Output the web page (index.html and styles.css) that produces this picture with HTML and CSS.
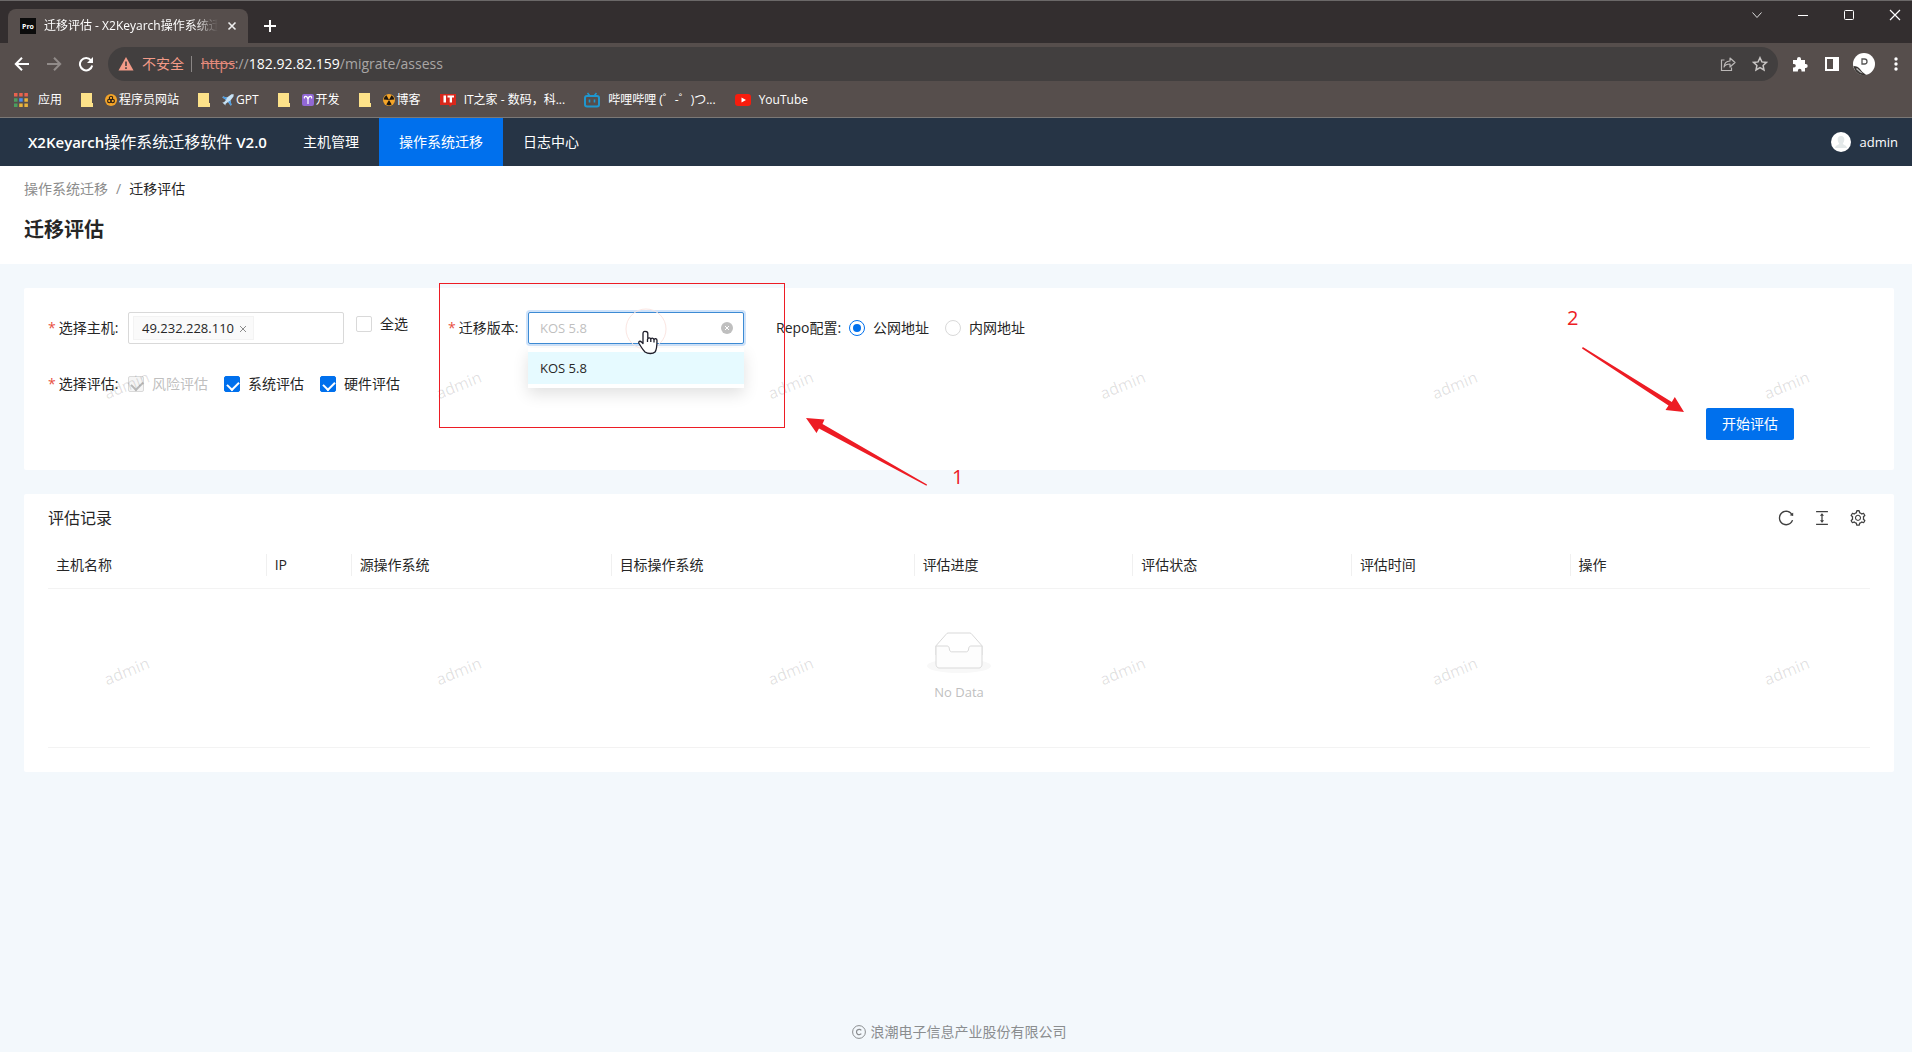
FILE: index.html
```html
<!DOCTYPE html>
<html lang="zh-CN">
<head>
<meta charset="utf-8">
<meta name="viewport" content="width=device-width, initial-scale=1">
<title>迁移评估 - X2Keyarch操作系统迁移软件</title>
<link rel="stylesheet" href="styles.css">
</head>
<body>
<div class="browser">
  <div class="tabstrip">
    <div class="tab">
      <svg class="tab-icon" width="16" height="16" viewBox="0 0 16 16"><rect width="16" height="16" fill="#0c0c0c"/><text x="8" y="11" text-anchor="middle" font-size="7" font-weight="700" fill="#fff">Pro</text></svg>
      <span class="tab-title">迁移评估 - X2Keyarch操作系统迁</span>
      <button class="icon-btn" aria-label="关闭标签页"><svg width="10" height="10" viewBox="0 0 10 10"><path d="M1.5 1.5l7 7M8.5 1.5l-7 7" stroke="#eee" stroke-width="1.6"/></svg></button>
    </div>
    <button class="icon-btn new-tab" aria-label="新标签页"><svg width="14" height="14" viewBox="0 0 14 14"><path d="M7 1v12M1 7h12" stroke="#fff" stroke-width="2"/></svg></button>
    <div class="window-controls">
      <button class="icon-btn" aria-label="搜索标签页"><svg width="12" height="12" viewBox="0 0 12 12"><path d="M1.5 3.5L6 8.5l4.5-5" fill="none" stroke="#ddd"/></svg></button>
      <button class="icon-btn" aria-label="最小化"><svg width="12" height="12" viewBox="0 0 12 12"><path d="M1 6.5h10" stroke="#fff"/></svg></button>
      <button class="icon-btn" aria-label="最大化"><svg width="12" height="12" viewBox="0 0 12 12"><rect x="1.5" y="1.5" width="9" height="9" rx="1" fill="none" stroke="#fff"/></svg></button>
      <button class="icon-btn" aria-label="关闭"><svg width="12" height="12" viewBox="0 0 12 12"><path d="M1 1l10 10M11 1L1 11" stroke="#fff" stroke-width="1.2"/></svg></button>
    </div>
  </div>
  <div class="toolbar">
    <button class="icon-btn" aria-label="后退"><svg width="16" height="16" viewBox="0 0 16 16"><path d="M15 8H2M8 1.8L1.8 8 8 14.2" fill="none" stroke="#fff" stroke-width="2"/></svg></button>
    <button class="icon-btn" aria-label="前进"><svg width="16" height="16" viewBox="0 0 16 16"><path d="M1 8h13M8 1.8L14.2 8 8 14.2" fill="none" stroke="#918b89" stroke-width="2"/></svg></button>
    <button class="icon-btn" aria-label="重新加载"><svg width="16" height="16" viewBox="0 0 16 16"><path d="M13 4.3A6.2 6.2 0 1 0 14.2 9.5" fill="none" stroke="#fff" stroke-width="2"/><path d="M15 1v6H9z" fill="#fff"/></svg></button>
    <div class="omnibox">
      <svg width="16" height="14" viewBox="0 0 16 14"><path d="M8 0l7.5 13.5H.5z" fill="#f39b88"/><path d="M8 4.5v4.5M8 10.3v1.7" stroke="#423f3f" stroke-width="1.6"/></svg>
      <span class="insecure">不安全</span>
      <span class="omnibox-rule"></span>
      <span class="url"><s>https</s>://<b>182.92.82.159</b>/migrate/assess</span>
      <span class="omnibox-actions">
        <button class="icon-btn" aria-label="分享"><svg width="16" height="16" viewBox="0 0 16 16"><path d="M4.5 4H1.5v10.5h10V11.5" fill="none" stroke="#bbb8b7" stroke-width="1.2"/><path d="M10 5V2l5 4.5L10 11V8c-3 0-5 .8-6 3C4.3 7 6.5 5.2 10 5z" fill="none" stroke="#bbb8b7" stroke-width="1.2" stroke-linejoin="round"/></svg></button>
        <button class="icon-btn" aria-label="收藏"><svg width="16" height="16" viewBox="0 0 16 16"><path d="M8 1.7l1.9 4.2 4.6.5-3.4 3.1.9 4.5-4-2.3L4 14l.9-4.5L1.5 6.4l4.6-.5z" fill="none" stroke="#c8c5c4" stroke-width="1.5"/></svg></button>
      </span>
    </div>
    <button class="icon-btn" aria-label="扩展程序"><svg width="16" height="16" viewBox="0 0 16 16"><path d="M1 4h4V3a2 2 0 1 1 4 0v1h4v4h.7a2 2 0 1 1 0 4H13v3.5H9.5V14.500a1.800 1.800 0 1 0-3.600 0v1H1V11.500h1a1.800 1.800 0 1 0 0-3.600H1z" fill="#fff"/></svg></button>
    <button class="icon-btn" aria-label="侧边栏"><svg width="16" height="16" viewBox="0 0 16 16"><path d="M1 1h14v14H1zM3 3v10h6V3z" fill="#fff" fill-rule="evenodd"/></svg></button>
    <button class="icon-btn" aria-label="个人资料"><svg width="22" height="22" viewBox="0 0 22 22"><circle cx="11" cy="11" r="11" fill="#fff"/><path d="M.5 13c3 0 5 1 6.500 3S10 20 13 21.700C7 23.500 1.500 19 .5 13z" fill="#3a3634"/><path d="M4 15l6 5.500-3-1-4-3.500z" fill="#bbb"/><path d="M9 6h2.500a2.500 2.500 0 0 1 0 5H9z" fill="none" stroke="#555" stroke-width="1.300"/></svg></button>
    <button class="icon-btn" aria-label="菜单"><svg width="4" height="16" viewBox="0 0 4 16"><g fill="#fff"><circle cx="2" cy="3" r="1.700"/><circle cx="2" cy="8" r="1.700"/><circle cx="2" cy="13" r="1.700"/></g></svg></button>
  </div>
  <nav class="bookmarks" aria-label="书签">
    <a href="#" class="bm bm-wide"><svg width="14" height="14" viewBox="0 0 14 14"><path d="M0 0h3.500v3.500H0zM5.200 0h3.500v3.500H5.200zM10.400 0h3.500v3.500h-3.500z" fill="#e8624e"/><path d="M0 5.200h3.500v3.500H0zM0 10.400h3.500v3.500H0z" fill="#4b9e5f"/><path d="M5.200 5.200h3.500v3.500H5.200z" fill="#4a8df0"/><path d="M10.400 5.200h3.500v3.500h-3.500zM5.200 10.400h3.500v3.500H5.200zM10.400 10.400h3.500v3.500h-3.500z" fill="#e8b33c"/></svg>应用</a>
    <a href="#" class="bm"><svg width="12" height="14" viewBox="0 0 12 14"><path d="M0 0h11v10h1v4H0z" fill="#fde289"/></svg><span class="bm-text"><svg width="12" height="12" viewBox="0 0 12 12"><circle cx="6" cy="6" r="6" fill="#f4a428"/><g fill="none" stroke="#2b2015" stroke-width="1.100"><circle cx="6" cy="4" r="1.700"/><circle cx="4.300" cy="7" r="1.700"/><circle cx="7.700" cy="7" r="1.700"/></g></svg>程序员网站</span></a>
    <a href="#" class="bm"><svg width="12" height="14" viewBox="0 0 12 14"><path d="M0 0h11v10h1v4H0z" fill="#fde289"/></svg><span class="bm-text"><svg width="12" height="12" viewBox="0 0 12 12"><path d="M1 2.500l4 1L9.500.3 11.700.3 11.500 2.500 8.500 6.500l1 4.500-1 .5L6 8 3.500 10v1.500L2 10 .3 8.500 2 8.300 4 6 .5 3.500z" fill="#c6e2f6"/><path d="M1 2.500l4 1-1 2.500L.5 3.500zM8.500 6.500l1 4.500-1 .5L6 8z" fill="#4a9be0"/></svg>GPT</span></a>
    <a href="#" class="bm"><svg width="12" height="14" viewBox="0 0 12 14"><path d="M0 0h11v10h1v4H0z" fill="#fde289"/></svg><span class="bm-text"><svg width="12" height="12" viewBox="0 0 12 12"><rect width="12" height="12" rx="2" fill="#9168d4"/><path d="M2.500 4.500C1.500 1.500 5.500 1.500 6 5.500v4.500M6 5.500c.5-4 4.500-4 3.500-1" fill="none" stroke="#fff" stroke-width="1.200"/></svg>开发</span></a>
    <a href="#" class="bm"><svg width="12" height="14" viewBox="0 0 12 14"><path d="M0 0h11v10h1v4H0z" fill="#fde289"/></svg><span class="bm-text"><svg width="12" height="12" viewBox="0 0 12 12"><circle cx="6" cy="6" r="6" fill="#f4a428"/><path d="M6 6L.7 5.500A5.300 5.300 0 0 1 3.500 1.300zM6 6l2.500-4.700a5.300 5.300 0 0 1 2.800 4.200zM6 6l2.700 4.600a5.300 5.300 0 0 1-5.400 0z" fill="#1d1710"/></svg>博客</span></a>
    <a href="#" class="bm bm-site"><svg width="16" height="14" viewBox="0 0 16 14"><path d="M0 1h16v11h-4L10 14l-1-2H0z" fill="#d8281c"/><path d="M3.500 2.500h2.500v7H3.500zM7.500 2.500H14v2h-2v5H9.700v-5H7.500z" fill="#fff"/></svg>IT之家 - 数码，科...</a>
    <a href="#" class="bm bm-site"><svg width="16" height="16" viewBox="0 0 16 16"><rect x="1" y="4" width="14" height="10.500" rx="2" fill="none" stroke="#1f97cf" stroke-width="2"/><path d="M3.500 1l2 2.500M12.500 1l-2 2.500M5.500 7.500v3M10.500 7.500v3" stroke="#1f97cf" stroke-width="1.600"/></svg>哔哩哔哩 (゜-゜)つ...</a>
    <a href="#" class="bm bm-site"><svg width="16" height="12" viewBox="0 0 16 12"><rect width="16" height="12" rx="3" fill="#f61c0d"/><path d="M6.500 3.500l4.500 2.500-4.500 2.500z" fill="#fff"/></svg>YouTube</a>
  </nav>
</div>

<header class="app-header">
  <div class="brand"><b>X2Keyarch</b>操作系统迁移软件<b> V2.0</b></div>
  <nav class="menu">
    <a href="#">主机管理</a>
    <a href="#" class="active" aria-current="page">操作系统迁移</a>
    <a href="#">日志中心</a>
  </nav>
  <div class="user">
    <svg width="20" height="20" viewBox="0 0 20 20"><circle cx="10" cy="10" r="10" fill="#fff"/><path d="M10 4c2.500 0 3.600 1.800 3.300 4-.2 1.600-.8 2.600-1.500 3.400.2 1.600 3.700 1.300 4.200 4.600H4c.5-3.300 4-3 4.200-4.600C7.500 10.600 6.900 9.600 6.700 8 6.400 5.800 7.500 4 10 4z" fill="#e3e8e9"/></svg>
    <span>admin</span>
  </div>
</header>

<section class="page-head">
  <nav class="breadcrumb" aria-label="面包屑"><a href="#">操作系统迁移</a><span>/</span><span class="current">迁移评估</span></nav>
  <h1>迁移评估</h1>
</section>

<main class="content">
  <form class="card assess-form">
    <div class="row">
      <label class="field-label required" for="host">选择主机:</label>
      <div class="control tags">
        <span class="tag">49.232.228.110<button type="button" class="icon-btn" aria-label="移除主机"><svg width="8" height="8" viewBox="0 0 8 8"><path d="M1 1l6 6M7 1L1 7" stroke="#8c8c8c"/></svg></button></span>
        <input id="host" type="text">
      </div>
      <label class="check select-all"><input type="checkbox">全选</label>
      <label class="field-label required" for="version">迁移版本:</label>
      <div class="control combo">
        <input id="version" type="text" role="combobox" aria-expanded="true" aria-controls="versions" value="KOS 5.8" readonly>
        <button type="button" class="icon-btn" aria-label="清除"><svg width="12" height="12" viewBox="0 0 12 12"><circle cx="6" cy="6" r="6" fill="#bfbfbf"/><path d="M4 4l4 4M8 4L4 8" stroke="#fff"/></svg></button>
        <ul class="options" id="versions" role="listbox"><li role="option" aria-selected="true">KOS 5.8</li></ul>
      </div>
      <fieldset class="group repo">
        <legend>Repo配置:</legend>
        <label class="check"><input type="radio" name="repo" checked>公网地址</label>
        <label class="check"><input type="radio" name="repo">内网地址</label>
      </fieldset>
    </div>
    <div class="row">
      <span class="field-label required" id="kinds">选择评估:</span>
      <div class="group" role="group" aria-labelledby="kinds">
        <label class="check disabled"><input type="checkbox" checked disabled>风险评估</label>
        <label class="check"><input type="checkbox" checked>系统评估</label>
        <label class="check"><input type="checkbox" checked>硬件评估</label>
      </div>
    </div>
    <div class="actions"><button type="button" class="primary">开始评估</button></div>
  </form>

  <section class="card records">
    <div class="records-bar">
      <h2>评估记录</h2>
      <div class="tools">
        <button class="icon-btn" aria-label="刷新"><svg width="18" height="18" viewBox="0 0 1024 1024"><path d="M909.1 209.3l-56.4 44.1C775.8 155.1 656.2 92 521.9 92 290 92 102.3 279.5 102 511.5 101.7 743.7 289.8 932 521.9 932c181.3 0 335.8-115 394.6-276.1 1.5-4.2-.7-8.9-4.9-10.3l-56.7-19.5a8 8 0 00-10.1 4.8c-1.8 5-3.8 10-5.9 14.9-17.3 41-42.1 77.8-73.7 109.4A344.77 344.77 0 01655.9 829c-42.3 17.9-87.4 27-133.8 27-46.5 0-91.5-9.1-133.8-27A341.5 341.5 0 01279 755.2a342.16 342.16 0 01-73.7-109.4c-17.9-42.4-27-87.4-27-133.9s9.1-91.5 27-133.9c17.3-41 42.1-77.8 73.7-109.4 31.6-31.6 68.4-56.4 109.3-73.8 42.3-17.9 87.4-27 133.8-27 46.5 0 91.5 9.1 133.8 27a341.5 341.5 0 01109.3 73.8c9.9 9.9 19.2 20.4 27.8 31.4l-60.2 47a8 8 0 003 14.1l175.6 43c5 1.2 9.9-2.6 9.9-7.7l.8-180.9c-.1-6.6-7.8-10.3-13-6.2z"/></svg></button>
        <button class="icon-btn" aria-label="密度"><svg width="18" height="18" viewBox="0 0 1024 1024"><path d="M840 836H184c-4.4 0-8 3.6-8 8v60c0 4.4 3.6 8 8 8h656c4.4 0 8-3.6 8-8v-60c0-4.4-3.6-8-8-8zm0-724H184c-4.4 0-8 3.6-8 8v60c0 4.4 3.6 8 8 8h656c4.4 0 8-3.6 8-8v-60c0-4.4-3.6-8-8-8zM610.8 378c6 0 9.4-7 5.7-11.7L515.7 238.7a7.14 7.14 0 00-11.3 0L403.6 366.3a7.23 7.23 0 005.7 11.7H476v268h-62.8c-6 0-9.4 7-5.7 11.7l100.8 127.5c2.9 3.7 8.5 3.7 11.3 0l100.8-127.5c3.7-4.7.4-11.7-5.7-11.7H548V378h62.8z"/></svg></button>
        <button class="icon-btn" aria-label="列设置"><svg width="18" height="18" viewBox="0 0 1024 1024"><path d="M924.8 625.7l-65.5-56c3.1-19 4.7-38.4 4.7-57.8s-1.6-38.8-4.7-57.8l65.5-56a32.03 32.03 0 009.3-35.2l-.9-2.6a443.74 443.74 0 00-79.7-137.9l-1.8-2.1a32.12 32.12 0 00-35.1-9.5l-81.3 28.9c-30-24.6-63.5-44-99.7-57.6l-15.7-85a32.05 32.05 0 00-25.8-25.7l-2.7-.5c-52.1-9.4-106.9-9.4-159 0l-2.7.5a32.05 32.05 0 00-25.8 25.7l-15.8 85.4a351.86 351.86 0 00-99 57.4l-81.9-29.1a32 32 0 00-35.1 9.5l-1.8 2.1a446.02 446.02 0 00-79.7 137.9l-.9 2.6c-4.5 12.5-.8 26.5 9.3 35.2l66.3 56.6c-3.1 18.8-4.6 38-4.6 57.1 0 19.2 1.5 38.4 4.6 57.1L99 625.5a32.03 32.03 0 00-9.3 35.2l.9 2.6c18.1 50.4 44.9 96.9 79.7 137.9l1.8 2.1a32.12 32.12 0 0035.1 9.5l81.9-29.1c29.8 24.5 63.1 43.9 99 57.4l15.8 85.4a32.05 32.05 0 0025.8 25.7l2.7.5a449.4 449.4 0 00159 0l2.7-.5a32.05 32.05 0 0025.8-25.7l15.7-85a350 350 0 0099.7-57.6l81.3 28.9a32 32 0 0035.1-9.5l1.8-2.1c34.8-41.1 61.6-87.5 79.7-137.9l.9-2.6c4.5-12.3.8-26.3-9.3-35zM788.3 465.9c2.5 15.1 3.8 30.6 3.8 46.1s-1.3 31-3.8 46.1l-6.6 40.1 74.7 63.9a370.03 370.03 0 01-42.6 73.6L721 702.8l-31.4 25.8c-23.9 19.6-50.5 35-79.3 45.8l-38.1 14.3-17.9 97a377.5 377.5 0 01-85 0l-17.9-97.2-37.8-14.5c-28.5-10.8-55-26.2-78.7-45.7l-31.4-25.9-93.4 33.2c-17-22.9-31.2-47.6-42.6-73.6l75.5-64.5-6.5-40c-2.4-14.9-3.7-30.3-3.7-45.5 0-15.3 1.2-30.6 3.7-45.5l6.5-40-75.5-64.5c11.3-26.1 25.6-50.7 42.6-73.6l93.4 33.2 31.4-25.9c23.7-19.5 50.2-34.9 78.7-45.7l37.9-14.3 17.9-97.2c28.1-3.2 56.8-3.2 85 0l17.9 97 38.1 14.3c28.7 10.8 55.4 26.2 79.3 45.8l31.4 25.8 92.8-32.9c17 22.9 31.2 47.6 42.6 73.6L781.8 426l6.5 39.9zM512 326c-97.2 0-176 78.8-176 176s78.8 176 176 176 176-78.8 176-176-78.8-176-176-176zm79.2 255.2A111.6 111.6 0 01512 614c-29.9 0-58-11.7-79.2-32.8A111.6 111.6 0 01400 502c0-29.9 11.7-58 32.8-79.2C454 401.6 482.1 390 512 390c29.9 0 58 11.6 79.2 32.8A111.6 111.6 0 01624 502c0 29.9-11.7 58-32.8 79.2z"/></svg></button>
      </div>
    </div>
    <table>
      <colgroup><col class="c-name"><col class="c-ip"><col class="c-source"><col class="c-target"><col class="c-info"><col class="c-info"><col class="c-info"><col></colgroup>
      <thead><tr><th>主机名称</th><th>IP</th><th>源操作系统</th><th>目标操作系统</th><th>评估进度</th><th>评估状态</th><th>评估时间</th><th>操作</th></tr></thead>
      <tbody><tr><td colspan="8"><div class="empty">
        <svg width="64" height="41" viewBox="0 0 64 41"><g transform="translate(0 1)" fill="none" fill-rule="evenodd"><ellipse fill="#f8f8f8" cx="32" cy="33" rx="32" ry="7"/><g stroke="#d9d9d9"><path d="M55 12.76L44.854 1.258C44.367.474 43.656 0 42.907 0H21.093c-.749 0-1.46.474-1.947 1.257L9 12.761V22h46v-9.24z" fill="#fff"/><path d="M41.613 15.931c0-1.605.994-2.93 2.227-2.931H55v18.137C55 33.26 53.68 35 52.05 35h-40.1C10.32 35 9 33.259 9 31.137V13h11.16c1.233 0 2.227 1.323 2.227 2.928v.022c0 1.605 1.005 2.901 2.237 2.901h14.752c1.232 0 2.237-1.308 2.237-2.913v-.007z" fill="#fdfdfd"/></g></g></svg>
        <span>No Data</span></div></td></tr></tbody>
    </table>
  </section>

  <div class="watermarks" aria-hidden="true">
    <span>admin</span><span>admin</span><span>admin</span><span>admin</span><span>admin</span><span>admin</span>
    <span>admin</span><span>admin</span><span>admin</span><span>admin</span><span>admin</span><span>admin</span>
  </div>
</main>

<footer class="footer">
  <svg width="14" height="14" viewBox="0 0 14 14"><g fill="none" stroke="#8a8d8f"><circle cx="7" cy="7" r="6.400"/><path d="M9.300 5.300A2.700 2.700 0 1 0 9.300 8.700" stroke-width="1.200"/></g></svg>
  浪潮电子信息产业股份有限公司
</footer>

<svg class="annotations" aria-hidden="true">
  <circle cx="646" cy="329" r="20" fill="none" stroke="#fbe6e2"/>
  <rect x="439.500" y="283.500" width="345" height="144" fill="none" stroke="#ed1c24"/>
  <g fill="#ed1c24">
    <path d="M806 418l18.500 1.500-2 4.500L927 484.500l-.5 1.200L819 428.500l-2.500 4.500z"/>
    <path d="M1684 412l-18.500-2 3-4.500L1582 348.500l.8-1.500 89 55 3-5z"/>
    <text x="952" y="484">1</text>
    <text x="1567" y="325">2</text>
  </g>
  <path d="M645.500 331.500c-1.500-.5-2.500.5-2.500 2v10l-1.500-1.500c-1.500-1.500-3.500-.5-2.500 1.500 2 3 3.500 6 6 8.500 3 2 8 2 10 0 1.800-2.500 2-6 2-11.500 0-2-2.500-2.500-3-.5-.2-2.500-3-2.500-3.200-.5-.3-2-2.800-2-3-.5v-5.500c0-1.200-1-2-2.300-2zM647.500 339v3M650.800 339.500v2.500M654 340v2.500" fill="#fff" stroke="#1e1e2a" stroke-width="1.300" stroke-linejoin="round"/>
</svg>
</body>
</html>
```
FILE: styles.css
```css
* { box-sizing: border-box; }

body {
  position: relative;
  display: flex;
  flex-direction: column;
  min-height: 100vh;
  margin: 0;
  background: #f3f8fc;
  color: #262626;
  font: 14px/22px "Open Sans", "Noto Sans CJK SC", sans-serif;
}

h1, h2, ul, fieldset { margin: 0; padding: 0; border: 0; }
a { color: inherit; text-decoration: none; }
svg { flex: none; }
button, input { font: inherit; color: inherit; }

.icon-btn {
  display: flex;
  flex: none;
  align-items: center;
  justify-content: center;
  padding: 0;
  border: 0;
  background: none;
}

/* Browser window */
.browser {
  border-top: 1px solid #6b6868;
  border-bottom: 1px solid #7b7876;
  background: #564e4c;
  color: #fff;
}

.tabstrip {
  display: flex;
  align-items: flex-end;
  height: 42px;
  padding-left: 8px;
  background: #332e2f;
}

.tab {
  display: flex;
  align-items: center;
  gap: 8px;
  width: 240px;
  height: 34px;
  padding: 0 10px 0 12px;
  border-radius: 8px 8px 0 0;
  background: #564e4c;
  font-size: 12px;
}

.tab-title {
  flex: 1;
  overflow: hidden;
  white-space: nowrap;
  mask-image: linear-gradient(90deg, #000 86%, transparent);
}

.tab .icon-btn { width: 12px; }
.new-tab { width: 44px; height: 34px; }

.window-controls {
  display: flex;
  align-self: flex-start;
  margin-left: auto;
}

.window-controls .icon-btn { width: 46px; height: 28px; }
.window-controls .icon-btn:last-child { width: 34px; margin-left: 6px; }

.toolbar {
  display: flex;
  align-items: center;
  height: 42px;
  padding: 0 6px;
}

.toolbar > .icon-btn { width: 32px; }
.toolbar > .icon-btn:last-child { width: 20px; }
.toolbar > .icon-btn:nth-last-child(2) { margin-right: 6px; }

.omnibox {
  display: flex;
  flex: 1;
  align-items: center;
  height: 34px;
  margin: 0 6px;
  padding: 0 2px 0 10px;
  border-radius: 17px;
  background: #423f3f;
}

.insecure { margin-left: 8px; color: #f39b88; }
.omnibox-rule { width: 1px; height: 16px; margin: 0 9px 0 7px; background: #8a8685; }
.url { color: #a9a6a5; }
.url s { color: #e58a7b; }
.url b { color: #fff; font-weight: 400; }
.omnibox-actions { display: flex; margin-left: auto; }
.omnibox-actions .icon-btn { width: 32px; }

.bookmarks {
  display: flex;
  align-items: center;
  gap: 19px;
  height: 32px;
  padding: 0 14px 3px;
  font-size: 12px;
}

.bm { display: flex; align-items: center; gap: 12px; white-space: nowrap; }
.bm-wide { gap: 10px; }
.bm-site { gap: 8px; }
.bm-text { display: flex; align-items: center; gap: 2px; }

/* Application header */
.app-header {
  display: flex;
  align-items: center;
  height: 48px;
  padding: 0 14px 0 28px;
  background: #263445;
  color: #fff;
}

.brand { flex: 0 0 255px; font-size: 16px; white-space: pre; }
.brand b { font-size: 15px; font-weight: 600; }
.menu { display: flex; align-self: stretch; }
.menu a { padding: 0 20px; line-height: 48px; white-space: nowrap; }
.menu .active { background: #0070ed; }
.user { display: flex; align-items: center; gap: 9px; margin-left: auto; font-size: 13px; }

.page-head { padding: 12px 24px 18px; background: #fff; }
.breadcrumb { display: flex; gap: 8px; color: #8c8c8c; }
.breadcrumb .current { color: #262626; }
h1 { margin-top: 14px; font-size: 20px; line-height: 32px; }

.content {
  position: relative;
  display: flex;
  flex: 1;
  flex-direction: column;
  gap: 24px;
  padding: 24px 18px 24px 24px;
}

.card { background: #fff; border-radius: 2px; }

/* Assessment form */
.assess-form { padding: 24px 24px 30px; }
.row { display: flex; min-height: 32px; }
.row + .row { margin-top: 24px; }
.field-label { width: 80px; line-height: 32px; white-space: nowrap; }
.required::before { content: "*"; margin-right: 3px; color: #e8503f; }

.control {
  display: flex;
  align-items: center;
  width: 216px;
  height: 32px;
  border: 1px solid #d9d9d9;
  border-radius: 2px;
  background: #fff;
  font-size: 13px;
}

.control input { flex: 1; min-width: 0; padding: 0; border: 0; outline: 0; background: none; }
.tags { padding: 0 4px; }

.tag {
  display: flex;
  align-items: center;
  gap: 5px;
  height: 24px;
  padding: 0 6px 0 8px;
  border: 1px solid #f3f3f3;
  background: #fafafa;
}

.tag .icon-btn { padding-top: 2px; }

.combo {
  position: relative;
  padding: 0 10px 0 11px;
  border-color: #3d8bd4;
  box-shadow: 0 0 0 2px #cfe3fa;
}

.combo input { color: #bfbfbf; }

.options {
  position: absolute;
  top: 35px;
  left: -1px;
  width: 216px;
  padding: 4px 0;
  background: #fff;
  box-shadow: 0 6px 16px rgba(0, 0, 0, .12);
  list-style: none;
}

.options li { padding: 0 12px; background: #e6faff; font-weight: 500; line-height: 32px; }

.check { display: flex; align-items: center; gap: 8px; white-space: nowrap; }
.select-all { height: 24px; margin: 0 40px 0 12px; }

.check input {
  position: relative;
  width: 16px;
  height: 16px;
  margin: 0;
  border: 1px solid #d9d9d9;
  border-radius: 2px;
  background: #fff;
  appearance: none;
}

.check input[type="radio"] { border-radius: 50%; }
.check input[type="checkbox"]:checked { border-color: #0070ed; background: #0070ed; }

.check input[type="checkbox"]:checked::after {
  content: "";
  position: absolute;
  top: 2px;
  left: 4px;
  width: 6px;
  height: 9px;
  border: solid #fff;
  border-width: 0 2px 2px 0;
  transform: rotate(45deg);
}

.check input[type="radio"]:checked { border-color: #0070ed; }

.check input[type="radio"]:checked::after {
  content: "";
  position: absolute;
  inset: 3px;
  border-radius: 50%;
  background: #0070ed;
}

.check.disabled { color: #bfbfbf; }
.check.disabled input[type="checkbox"] { border-color: #d9d9d9; background: #f5f5f5; }
.check.disabled input[type="checkbox"]::after { border-color: #b8b8b8; }

.group { display: flex; align-items: center; gap: 16px; }
.repo { margin-left: 32px; }
.repo legend { float: left; width: 57px; padding: 0; line-height: 32px; white-space: nowrap; }

.actions { display: flex; justify-content: flex-end; margin-top: 8px; padding-right: 76px; }

.primary {
  height: 32px;
  padding: 0 16px;
  border: 0;
  border-radius: 2px;
  background: #0070ed;
  color: #fff;
}

/* Records table */
.records { padding: 0 24px 24px; }
.records-bar { display: flex; align-items: center; justify-content: space-between; height: 48px; }
h2 { font-size: 16px; font-weight: 400; }
.tools { display: flex; gap: 18px; padding-right: 3px; fill: #404040; }

table { width: 100%; border-collapse: separate; border-spacing: 0; table-layout: fixed; }
.c-name, .c-info { width: 12%; }
.c-ip { width: 85px; }
.c-source { width: 260px; }
.c-target { width: 303px; }

th {
  padding: 12px 8px;
  border-bottom: 1px solid #f3f3f3;
  background: linear-gradient(#f0f0f0, #f0f0f0) right center / 1px 22px no-repeat;
  font-weight: 400;
  text-align: left;
}

th:last-child { background: none; }
td { padding: 43px 8px 44px; border-bottom: 1px solid #f3f3f3; }
.empty { display: flex; flex-direction: column; align-items: center; gap: 8px; color: #bfbfbf; font-size: 13px; }

/* Tiled user name laid over the content */
.watermarks {
  position: absolute;
  inset: 0;
  display: grid;
  grid-template-columns: repeat(6, 332px);
  grid-auto-rows: 286px;
  align-content: start;
  overflow: hidden;
  color: rgba(0, 0, 0, .13);
  font-size: 16px;
  pointer-events: none;
}

.watermarks span { justify-self: start; align-self: start; margin: 110px 0 0 103px; transform: rotate(-22deg); }

.footer {
  display: flex;
  align-items: center;
  justify-content: center;
  gap: 5px;
  padding: 0 0 9px 6px;
  color: #8a8d8f;
}

.annotations {
  position: absolute;
  inset: 0;
  width: 100%;
  height: 100%;
  font-size: 20px;
  pointer-events: none;
}
```
